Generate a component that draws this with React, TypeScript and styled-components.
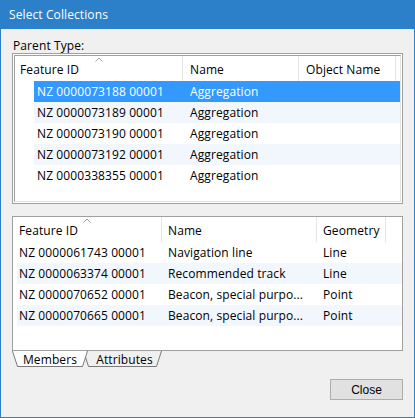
import React from 'react';
import styled, { createGlobalStyle } from 'styled-components';

const GlobalStyle = createGlobalStyle`
  html, body {
    margin: 0;
    padding: 0;
    background: #f0f0f0;
  }
  * {
    box-sizing: border-box;
  }
`;

const accent = '#2b80c9';

const Window = styled.div`
  width: 415px;
  height: 418px;
  display: flex;
  flex-direction: column;
  border: 1px solid ${accent};
  border-top: none;
  background: #f0f0f0;
  font-family: 'Open Sans', 'Noto Sans', sans-serif;
  font-size: 12px;
  letter-spacing: 0.1px;
  color: #000;
`;

const TitleBar = styled.div`
  height: 29px;
  flex: none;
  display: flex;
  align-items: center;
  padding-left: 8px;
  background: ${accent};
  color: #fff;
  font-size: 12px;
  padding-bottom: 1px;
`;

const Body = styled.div`
  flex: 1;
  display: flex;
  flex-direction: column;
  padding: 9px 11px 0 11px;
`;

const Label = styled.div`
  height: 15px;
  line-height: 15px;
  padding-left: 1px;
`;

const Frame = styled.div`
  height: 151px;
  border: 1px solid #a0a0a0;
  padding: 1px;
  background: #fff;
  display: flex;
`;

const ListArea = styled.div`
  flex: 1;
  border: 1px solid;
  border-color: #a0a0a0 #e3e3e3 #e3e3e3 #a0a0a0;
  background: #fff;
  overflow: hidden;
`;

const BottomBox = styled.div`
  height: 135px;
  margin-top: 12px;
  border: 1px solid #a0a0a0;
  background: #fff;
  overflow: hidden;
`;

const HeaderRow = styled.div`
  display: flex;
  height: 25px;
`;

const HeaderCell = styled.div<{ $w: number; $pad: number }>`
  position: relative;
  width: ${(p) => p.$w}px;
  flex: none;
  padding-left: ${(p) => p.$pad}px;
  padding-top: 1px;
  display: flex;
  align-items: center;
  border-right: 1px solid #e5e5e5;
  white-space: nowrap;
`;

const SortArrow = styled.svg`
  position: absolute;
  top: 1px;
  left: 50%;
  transform: translateX(-50%);
`;

const Row = styled.div<{ $indent: number; $alt?: boolean; $selected?: boolean }>`
  display: flex;
  height: 21px;
  margin-left: ${(p) => p.$indent}px;
  background: ${(p) => (p.$selected ? '#3399ff' : p.$alt ? '#f2f7fd' : 'transparent')};
  color: ${(p) => (p.$selected ? '#fff' : '#000')};
`;

const Cell = styled.div<{ $w: number; $pad: number }>`
  width: ${(p) => p.$w}px;
  flex: none;
  padding-left: ${(p) => p.$pad}px;
  display: flex;
  align-items: center;
  white-space: nowrap;
  overflow: hidden;
`;

const TabStrip = styled.div`
  display: flex;
  height: 16px;
`;

const Tab = styled.div<{ $w: number; $active?: boolean }>`
  position: relative;
  width: ${(p) => p.$w}px;
  height: 16px;
  margin-left: ${(p) => (p.$active ? 0 : -5)}px;
  z-index: ${(p) => (p.$active ? 2 : 1)};
  display: flex;
  justify-content: center;
  align-items: center;
  padding-top: 2px;
  line-height: 14px;
  padding-left: ${(p) => (p.$active ? 0 : 4)}px;

  svg {
    position: absolute;
    left: 0;
    top: 0;
    z-index: -1;
  }
`;

const Footer = styled.div`
  display: flex;
  justify-content: flex-end;
  margin-top: 12px;
`;

const Button = styled.button`
  width: 73px;
  height: 21px;
  padding: 0;
  background: #e1e1e1;
  border: 1px solid #adadad;
  font-family: 'Liberation Sans Narrow', 'Liberation Sans', sans-serif;
  font-size: 12px;
  color: #000;
`;

type Col = { title: string; w: number; pad: number; rowW: number; rowPad: number };

const parentCols: Col[] = [
  { title: 'Feature ID', w: 168, pad: 5, rowW: 149, rowPad: 3 },
  { title: 'Name', w: 116, pad: 7, rowW: 116, rowPad: 7 },
  { title: 'Object Name', w: 97, pad: 7, rowW: 97, rowPad: 7 },
];

const parentRows = [
  ['NZ 0000073188 00001', 'Aggregation', ''],
  ['NZ 0000073189 00001', 'Aggregation', ''],
  ['NZ 0000073190 00001', 'Aggregation', ''],
  ['NZ 0000073192 00001', 'Aggregation', ''],
  ['NZ 0000338355 00001', 'Aggregation', ''],
];

const memberCols: Col[] = [
  { title: 'Feature ID', w: 149, pad: 6, rowW: 145, rowPad: 2 },
  { title: 'Name', w: 155, pad: 6, rowW: 155, rowPad: 6 },
  { title: 'Geometry', w: 69, pad: 6, rowW: 69, rowPad: 6 },
];

const memberRows = [
  ['NZ 0000061743 00001', 'Navigation line', 'Line'],
  ['NZ 0000063374 00001', 'Recommended track', 'Line'],
  ['NZ 0000070652 00001', 'Beacon, special purpo...', 'Point'],
  ['NZ 0000070665 00001', 'Beacon, special purpo...', 'Point'],
];

const Arrow = () => (
  <SortArrow width='8' height='5' viewBox='0 0 8 5'>
    <path d='M0.5 4.5 L4 1 L7.5 4.5' fill='none' stroke='#9aa3ae' strokeWidth='1' />
  </SortArrow>
);

const ListView = ({
  cols,
  rows,
  indent,
  selected,
}: {
  cols: Col[];
  rows: string[][];
  indent: number;
  selected?: number;
}) => (
  <>
    <HeaderRow>
      {cols.map((c, i) => (
        <HeaderCell key={c.title} $w={c.w} $pad={c.pad}>
          {i === 0 && <Arrow />}
          {c.title}
        </HeaderCell>
      ))}
    </HeaderRow>
    {rows.map((r, i) => (
      <Row key={r[0]} $indent={indent} $alt={i % 2 === 1} $selected={i === selected}>
        {cols.map((c, j) => (
          <Cell key={c.title} $w={c.rowW} $pad={c.rowPad}>
            {r[j]}
          </Cell>
        ))}
      </Row>
    ))}
  </>
);

const TabShape = ({ w, active }: { w: number; active?: boolean }) => (
  <svg width={w} height='16' viewBox={`0 0 ${w} 16`}>
    <path
      d={`M0.5 0 L5.5 15.5 L${w - 5.5} 15.5 L${w - 0.5} 0`}
      fill={active ? '#fff' : '#f0f0f0'}
      stroke='#7a7a7a'
      strokeWidth='1'
    />
  </svg>
);

export default function App() {
  return (
    <>
      <GlobalStyle />
      <Window>
        <TitleBar>Select Collections</TitleBar>
        <Body>
          <Label>Parent Type:</Label>
          <Frame>
            <ListArea>
              <ListView cols={parentCols} rows={parentRows} indent={19} selected={0} />
            </ListArea>
          </Frame>
          <BottomBox>
            <ListView cols={memberCols} rows={memberRows} indent={4} />
          </BottomBox>
          <TabStrip>
            <Tab $w={76} $active>
              <TabShape w={76} active />
              Members
            </Tab>
            <Tab $w={79}>
              <TabShape w={79} />
              Attributes
            </Tab>
          </TabStrip>
          <Footer>
            <Button>Close</Button>
          </Footer>
        </Body>
      </Window>
    </>
  );
}
